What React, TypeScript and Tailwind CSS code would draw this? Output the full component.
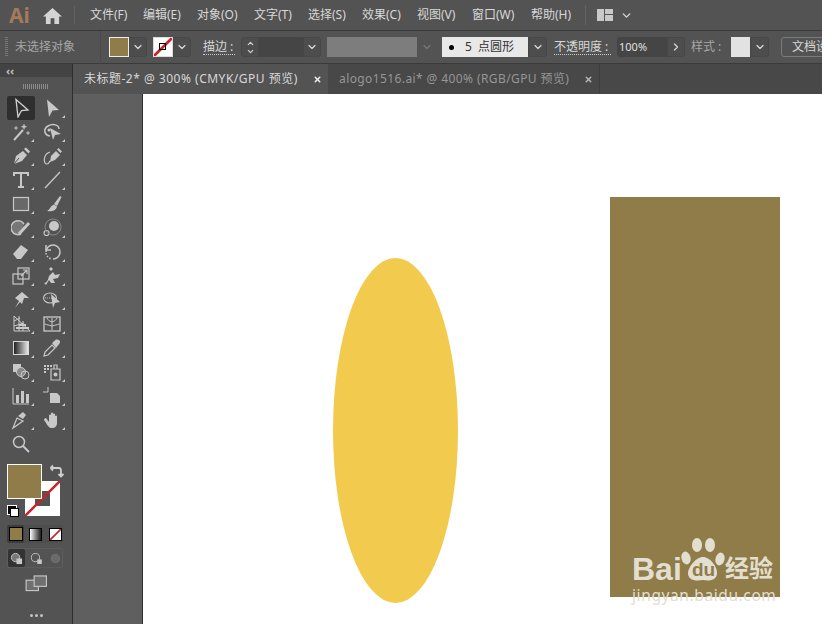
import React from "react";
import { ChevronDown, ChevronUp, ChevronRight, X } from "lucide-react";

const font = { fontFamily: '"Noto Sans", "Noto Sans CJK SC", sans-serif' };

const menus = [
  { label: "文件(F)", w: "w-[53px]" },
  { label: "编辑(E)", w: "w-[54px]" },
  { label: "对象(O)", w: "w-[57px]" },
  { label: "文字(T)", w: "w-[54px]" },
  { label: "选择(S)", w: "w-[54px]" },
  { label: "效果(C)", w: "w-[55px]" },
  { label: "视图(V)", w: "w-[55px]" },
  { label: "窗口(W)", w: "w-[59px]" },
  { label: "帮助(H)", w: "w-[53px]" },
];

const Drop: React.FC<{ w?: string }> = ({ w = "w-[18px]" }) => (
  <div className={`flex h-[20px] shrink-0 items-center justify-center rounded-r-[3px] border border-[#474747] bg-[#4d4d4d] ${w}`}>
    <ChevronDown size={12} strokeWidth={2.5} className="text-[#d6d6d6]" />
  </div>
);

const s = "none";
const c = "#c8c8c8";

// tool glyphs, 20x20 box, in the order of the panel (left, right per row)
const tools: React.ReactNode[] = [
  <path d="M5 1.500 L17 12 L10.500 12.500 L7 19 Z" fill={s} stroke="#d0d0d0" strokeWidth="1.300" />,
  <path d="M5 1.500 L17 12 L10.500 12.500 L7 19 Z" fill={c} />,
  <g stroke={c} fill={c}><path d="M3 18 L12 8" strokeWidth="2" /><path d="M13 2 l.8 2 2 .8 -2 .8 -.8 2 -.8 -2 -2 -.8 2 -.8z M5 4 l.5 1.500 1.500 .5 -1.500 .5 -.5 1.500 -.5 -1.500 -1.500 -.5 1.500 -.5z M17 9 l.5 1.500 1.500 .5 -1.500 .5 -.5 1.500 -.5 -1.500 -1.500 -.5 1.500 -.5z" strokeWidth=".3" /></g>,
  <g><path d="M8 14 C2 13 1 7 6 4 C11 1 17 3 17 7" fill={s} stroke={c} strokeWidth="1.500" /><path d="M8 6 L19 12 L13 13 L11 18 Z" fill={c} /><circle cx="7" cy="8" r="1.500" fill={c} /></g>,
  <g><path d="M3 18 L5 10 L12 5 L16 9 L11 15 Z" fill={c} /><path d="M13 3 L15 1.500 L19 5.500 L17.500 7.500 Z" fill={c} /><path d="M3 18 L8 12" stroke="#535353" strokeWidth="1" /></g>,
  <g><path d="M8 16 L9 10 L14 5 L18 9 L13 14 Z" fill={c} /><path d="M15 3.500 L16.500 2 L20 5.500 L18.500 7 Z" fill={c} /><path d="M8 6 C1 8 1 18 5 18 C7 18 7 16 8 15" fill={s} stroke={c} strokeWidth="1.200" /></g>,
  <path d="M3 6 V3 H17 V6 M10 3 V17 M7 17 H13" fill={s} stroke={c} strokeWidth="2" />,
  <path d="M3 18 L18 2" stroke={c} strokeWidth="1.300" />,
  <rect x="2.500" y="3.500" width="15" height="13" fill="#686868" stroke={c} strokeWidth="1.200" />,
  <g><path d="M12 10 L18 2 L19.500 3 L15 12 Z" fill={c} /><path d="M12 10.500 L15 12.500 C14 17 9 18 5 17 C8 16 8 12 12 10.500Z" fill={c} /></g>,
  <g><path d="M13 6 A7 7 0 1 0 10 16" fill="#777" stroke={c} strokeWidth="1.500" /><path d="M8 16 L18 5" stroke={c} strokeWidth="3" /></g>,
  <g><circle cx="12" cy="8" r="5" fill={c} /><circle cx="4.500" cy="15" r="2.500" fill={s} stroke={c} strokeWidth="1.200" /><circle cx="11" cy="9" r="8" fill={s} stroke="#888" strokeWidth="1" /></g>,
  <path d="M2 12 L10 3 L17 8 L10 17 H6 Z" fill={c} />,
  <g fill={s} stroke={c} strokeWidth="1.500"><path d="M4 10 A7 7 0 1 1 11 17" /><path d="M4 11 A7 7 0 0 0 10 17" strokeDasharray="1.500 1.500" /><path d="M4 3 V8 H9" /></g>,
  <g fill={s} stroke={c} strokeWidth="1.200"><rect x="2" y="8" width="10" height="10" /><rect x="7" y="2" width="11" height="11" /><path d="M10 10 L16 4 M12 4 H16 V8" /></g>,
  <g fill={c}><path d="M2 17 C5 17 6 14 7 10 L11 6 L13 9 L18 8 L16 12 L11 13 L13 17 H9 L7 14 L4 19 Z" /><path d="M7 3 L9 1 L11 3 L9 5Z" /></g>,
  <path d="M4 18 L8 11 L4 8 L11 2 L18 8 L13 8 L11 14 L9 12 Z" fill={c} />,
  <g><ellipse cx="8" cy="8" rx="6.500" ry="5" fill={s} stroke={c} strokeWidth="1.100" /><path d="M3 8 H11" stroke={c} strokeDasharray="1 1" /><path d="M9 4 L18 12 L13 13 L11 18 Z" fill={c} /></g>,
  <g fill={s} stroke={c} strokeWidth="1"><path d="M3 2 V17 H19 L3 2Z" /><path d="M3 7 L9 4 M3 12 L13 9 M8 2 V17 M12 7 V17" /><path d="M5 14 H18 M8 11 H15" strokeWidth="2" /></g>,
  <g fill={s} stroke={c} strokeWidth="1"><rect x="2" y="3" width="16" height="14" strokeWidth="1.300" /><path d="M10 4 V16 M10 8 C7 7 6 6 5 4 M10 8 C13 7 14 6 15 4 M10 12 C7 11 5 11 3 10 M10 12 C13 11 15 11 17 10" /></g>,
  <g><defs><linearGradient id="grad" x1="0" x2="1" y1="0" y2="0"><stop offset="0" stopColor="#1a1a1a" /><stop offset="1" stopColor="#eeeeee" /></linearGradient></defs><rect x="2.500" y="3.500" width="15" height="13" fill="url(#grad)" stroke="#d8d8d8" /></g>,
  <g><path d="M2 18 L3 14 L10 7 L13 10 L6 17 Z" fill={s} stroke={c} strokeWidth="1.200" /><path d="M10 5 L14 1.500 Q17 1 18 3 Q18.500 5 15.500 8 L14 10 Z" fill={c} /></g>,
  <g><rect x="2" y="2" width="8" height="8" fill={c} /><circle cx="10" cy="10" r="4.500" fill="#888" stroke={c} /><circle cx="14" cy="13" r="4" fill={s} stroke={c} /></g>,
  <g fill={c}><path d="M9 7 H18 V18 H9 Z M12 3 H15 V7 H12Z" fill={s} stroke={c} strokeWidth="1.200" /><circle cx="13.500" cy="12.500" r="2" /><path d="M2 3 h2 v2 h-2z M5 3 h2 v2 h-2z M8 3 h2 v2 h-2z M2 6 h2 v2 h-2z M5 6 h2 v2 h-2z M2 9 h2 v2 h-2z" /></g>,
  <g fill={c}><path d="M2 2 V18 H18" fill={s} stroke={c} strokeWidth="1" /><rect x="5" y="9" width="3" height="8" /><rect x="10" y="5" width="3" height="12" /><rect x="15" y="8" width="3" height="9" /></g>,
  <g><path d="M8 7 H15 L18 10 V17 H8 Z" fill={c} /><path d="M1 6 H6 M6 1 V6" stroke={c} strokeWidth="1" /></g>,
  <g><path d="M2 18 L6 8 L12 11 Z" fill={s} stroke={c} strokeWidth="1.200" /><path d="M7 6 L12 2 L15 5 L12 9 Z" fill={c} /></g>,
  <path d="M4 8 L7 12 V5 Q8 4 9 5 V10 V3 Q10 2 11 3 V10 V4 Q12 3 13 4 V10 V6 Q14 5 15 6 V13 C15 17 12 18.500 9 18 C6 17.500 5 14 2 10 Q2 8 4 8Z" fill={c} />,
  <g fill={s} stroke={c} strokeWidth="1.500"><circle cx="8" cy="8" r="5.500" /><path d="M12 12 L18 18" strokeWidth="2" /></g>,
  null,
];

const noMore = new Set([0, 28, 29]);

const ToolCell: React.FC<{ i: number }> = ({ i }) => {
  const glyph = tools[i];
  return (
    <div
      className={`relative flex h-[24px] w-[28px] items-center justify-center rounded-[2px] ${
        i === 0 ? "bg-[#2f2f2f]" : ""
      }`}
    >
      {glyph && (
        <svg viewBox="0 0 20 20" className="h-[20px] w-[20px]">
          {glyph}
        </svg>
      )}
      {!noMore.has(i) && (
        <span className="absolute bottom-[2px] right-[1px] h-0 w-0 border-b-[3px] border-l-[3px] border-b-[#c8c8c8] border-l-transparent" />
      )}
    </div>
  );
};

const NoneSwatch: React.FC<{ className: string }> = ({ className }) => (
  <svg viewBox="0 0 20 20" className={className}>
    <rect width="20" height="20" fill="#ffffff" />
    <path d="M0 20 L20 0" stroke="#c8232c" strokeWidth="3" />
  </svg>
);

const ToolPanel: React.FC = () => (
  <aside className="flex w-[73px] shrink-0 flex-col border-r border-[#2e2e2e] bg-[#535353]">
    <div className="flex h-[13px] items-center bg-[#434343] pl-[6px]">
      <span className="text-[11px] font-bold leading-none text-[#c4c4c4]">‹‹</span>
    </div>
    <div className="flex h-[19px] items-center justify-center">
      <div className="h-[5px] w-[26px] bg-[repeating-linear-gradient(90deg,#8a8a8a_0,#8a8a8a_1px,transparent_1px,transparent_2px)]" />
    </div>
    <div className="grid grid-cols-[28px_28px] gap-x-[3px] pl-[7px]">
      {tools.map((_, i) => (
        <ToolCell key={i} i={i} />
      ))}
    </div>
    {/* fill + stroke */}
    <div className="relative ml-[7px] mt-[8px] h-[54px] w-[56px]">
      <div className="absolute left-[18px] top-[17px] flex h-[35px] w-[35px] items-center justify-center bg-white">
        <div className="h-[15px] w-[15px] bg-[#535353]" />
        <svg viewBox="0 0 35 35" className="absolute inset-0">
          <path d="M0 35 L35 0" stroke="#c8232c" strokeWidth="2.500" />
        </svg>
      </div>
      <div className="absolute left-0 top-0 h-[35px] w-[35px] border border-white bg-[#8f7c48]" />
      <svg viewBox="0 0 14 14" className="absolute left-[43px] top-0 h-[14px] w-[14px]" fill="none" stroke="#cfcfcf" strokeWidth="1.800">
        <path d="M2 4 H9 Q11 4 11 7 V12 M0.500 4 L3 1.500 M0.500 4 L3 6.500 M8.500 10 L11 12.500 L13.500 10" />
      </svg>
      <div className="absolute left-0 top-[41px] h-[10px] w-[10px] border border-white bg-black" />
      <div className="absolute left-[3px] top-[44px] h-[9px] w-[9px] border border-black bg-white" />
    </div>
    <div className="ml-[7px] mt-[7px] flex h-[18px] w-[56px] items-center rounded-[2px] bg-[#4e4e4e]">
      <div className="flex h-[18px] w-[17px] items-center justify-center rounded-[2px] bg-[#3c3c3c]">
        <div className="h-[14px] w-[14px] border border-black bg-[#8f7c48]" />
      </div>
      <div className="ml-[5px] h-[13px] w-[13px] border border-black bg-gradient-to-r from-white to-[#222222]" />
      <div className="ml-[7px] flex border border-black">
        <NoneSwatch className="h-[11px] w-[11px]" />
      </div>
    </div>
    <div className="ml-[7px] mt-[5px] flex h-[20px] w-[56px] items-center rounded-[2px] border border-[#5c5c5c]">
      <div className="flex h-[18px] w-[17px] items-center justify-center rounded-[2px] bg-[#333333]">
        <svg viewBox="0 0 14 14" className="h-[13px] w-[13px]">
          <circle cx="6" cy="6" r="4.500" fill="#777" stroke="#c8c8c8" />
          <rect x="7" y="7" width="6" height="6" fill="#c8c8c8" />
        </svg>
      </div>
      <svg viewBox="0 0 14 14" className="ml-[5px] h-[13px] w-[13px]">
        <circle cx="6" cy="6" r="4.500" fill="#535353" stroke="#c8c8c8" />
        <rect x="8" y="8" width="5" height="5" fill="#c8c8c8" />
      </svg>
      <svg viewBox="0 0 14 14" className="ml-[7px] h-[13px] w-[13px]">
        <circle cx="7" cy="7" r="4.500" fill="#6a6a6a" stroke="#747474" />
      </svg>
    </div>
    <div className="mt-[7px] flex justify-center">
      <svg viewBox="0 0 24 18" className="h-[17px] w-[23px]" stroke="#c8c8c8" strokeWidth="1.200">
        <rect x="1" y="5.500" width="13" height="11" fill="#6f6f6f" />
        <rect x="9.500" y="1" width="13" height="11" fill="#6f6f6f" />
      </svg>
    </div>
    <div className="mt-[22px] flex justify-center gap-[2px]">
      <span className="h-[3px] w-[3px] rounded-full bg-[#c4c4c4]" />
      <span className="h-[3px] w-[3px] rounded-full bg-[#c4c4c4]" />
      <span className="h-[3px] w-[3px] rounded-full bg-[#c4c4c4]" />
    </div>
  </aside>
);

const Watermark: React.FC = () => (
  <div className="absolute left-[489px] top-[441px] h-[72px] w-[150px] text-[#e2ded0]">
    <div className="absolute left-0 top-[22px] text-[32px] font-bold leading-[24px]" style={{ fontFamily: '"Liberation Sans", sans-serif' }}>
      Bai
    </div>
    <svg viewBox="0 0 46 46" className="absolute left-[48px] top-[2px] h-[46px] w-[46px]" fill="#e2ded0">
      <ellipse cx="6" cy="21" rx="4.500" ry="6.500" transform="rotate(-15 6 21)" />
      <ellipse cx="17" cy="8" rx="5" ry="7" />
      <ellipse cx="30" cy="8" rx="5" ry="7" />
      <ellipse cx="40" cy="22" rx="4.500" ry="6.500" transform="rotate(15 40 22)" />
      <path d="M23 20 C30 20 38 30 37 37 C36 44 28 44 23 43 C17 44 9 44 8 37 C8 30 16 20 23 20Z" />
    </svg>
    <div className="absolute left-[60px] top-[26px] text-[19px] font-bold leading-[18px] text-[#8f7c48]" style={{ fontFamily: '"Liberation Sans", sans-serif' }}>
      du
    </div>
    <div className="absolute left-[93px] top-[18px] text-[24px] font-semibold leading-[28px]" style={{ fontFamily: '"Noto Sans CJK SC", sans-serif' }}>
      经验
    </div>
    <div className="absolute left-0 top-[50px] whitespace-nowrap text-[15.500px] leading-[20px] tracking-[0.6px] text-[#e2ded0]" style={font}>
      jingyan.baidu.com
    </div>
  </div>
);

export default function App() {
  return (
    <div className="flex h-[624px] w-[822px] flex-col overflow-hidden bg-[#535353] text-[12px] text-[#d8d8d8]" style={font}>
      {/* menu bar */}
      <header className="flex h-[31px] shrink-0 items-center border-b border-[#3a3a3a] bg-[#535353]">
        <span className="ml-[9px] w-[33px] text-[21px] font-bold leading-none text-[#a47a5c]">Ai</span>
        <svg viewBox="0 0 20 18" className="ml-[1px] h-[17px] w-[19px]" fill="#d4d4d4">
          <path d="M10 1 L20 10 H17 V18 H12 V12 H8 V18 H3 V10 H0 Z" />
        </svg>
        <div className="ml-[12px] mr-[15px] h-[18px] w-px bg-[#626262]" />
        {menus.map((m) => (
          <span key={m.label} className={`shrink-0 whitespace-nowrap text-[#d8d8d8] ${m.w}`}>
            {m.label}
          </span>
        ))}
        <div className="mx-[10px] ml-[1px] h-[20px] w-px bg-[#626262]" />
        <div className="flex items-center gap-[1px] pl-[1px]">
          <div className="h-[12px] w-[7px] bg-[#c8c8c8]" />
          <div className="flex flex-col gap-[1px]">
            <div className="h-[5px] w-[8px] bg-[#c8c8c8]" />
            <div className="h-[6px] w-[8px] bg-[#c8c8c8]" />
          </div>
        </div>
        <ChevronDown size={13} strokeWidth={2.5} className="ml-[7px] text-[#d6d6d6]" />
      </header>

      {/* control bar */}
      <div className="flex h-[33px] shrink-0 items-center whitespace-nowrap border-b border-[#3a3a3a] bg-[#535353]">
        <div className="ml-[5px] h-[20px] w-[3px] shrink-0 bg-[repeating-linear-gradient(180deg,#777777_0,#777777_1px,transparent_1px,transparent_2px)]" />
        <span className="ml-[7px] w-[60px] shrink-0 text-[#a6a6a6]">未选择对象</span>
        <div className="ml-[25px] mr-[8px] h-[33px] w-px shrink-0 bg-[#4a4a4a]" />
        <div className="h-[20px] w-[20px] shrink-0 border border-[#eeeeee] bg-[#8f7c48]" />
        <Drop />
        <div className="relative ml-[6px] h-[20px] w-[20px] shrink-0 border border-[#dddddd]">
          <NoneSwatch className="h-full w-full" />
          <div className="absolute left-[5px] top-[5px] h-[7px] w-[7px] border border-black" />
        </div>
        <Drop />
        <span className="ml-[12px] w-[32px] shrink-0 border-b border-dotted border-[#cfcfcf] leading-[15px] text-[#d8d8d8]">描边 :</span>
        <div className="ml-[6px] flex h-[20px] w-[18px] shrink-0 flex-col items-center justify-center rounded-l-[3px] border border-[#474747] bg-[#4d4d4d]">
          <ChevronUp size={9} strokeWidth={3} className="-mb-[1px] text-[#d6d6d6]" />
          <ChevronDown size={9} strokeWidth={3} className="text-[#d6d6d6]" />
        </div>
        <div className="h-[20px] w-[44px] shrink-0 bg-[#454545]" />
        <Drop />
        <div className="ml-[6px] h-[20px] w-[90px] shrink-0 bg-[#7d7d7d]" />
        <div className="flex h-[20px] w-[19px] shrink-0 items-center justify-center">
          <ChevronDown size={12} strokeWidth={2.5} className="text-[#757575]" />
        </div>
        <div className="ml-[6px] flex h-[20px] w-[86px] shrink-0 items-center bg-[#e8e8e8] pl-[7px] text-[#333333]">
          <span className="h-[5px] w-[5px] rounded-full bg-black" />
          <span className="ml-[11px]">5&nbsp; 点圆形</span>
        </div>
        <Drop w="w-[19px]" />
        <span className="ml-[7px] w-[57px] shrink-0 border-b border-dotted border-[#cfcfcf] leading-[15px] text-[#d8d8d8]">不透明度 :</span>
        <div className="ml-[6px] flex h-[20px] w-[50px] shrink-0 items-center rounded-l-[3px] bg-[#454545] pl-[2px] text-[11px] text-[#e0e0e0]">100%</div>
        <div className="flex h-[20px] w-[18px] shrink-0 items-center justify-center rounded-r-[3px] border border-[#474747] bg-[#4d4d4d]">
          <ChevronRight size={12} strokeWidth={2.5} className="text-[#d6d6d6]" />
        </div>
        <span className="ml-[6px] w-[34px] shrink-0 text-[#a6a6a6]">样式 :</span>
        <div className="ml-[6px] h-[20px] w-[19px] shrink-0 bg-[#e2e2e2]" />
        <Drop w="w-[19px]" />
        <div className="ml-[12px] flex h-[20px] w-[60px] shrink-0 items-center rounded-[3px] border border-[#7a7a7a] pl-[10px] text-[#d8d8d8]">文档设置</div>
      </div>

      <div className="flex min-h-0 flex-1">
        <ToolPanel />
        <div className="flex min-w-0 flex-1 flex-col">
          {/* tabs */}
          <div className="flex h-[30px] shrink-0 items-center whitespace-nowrap bg-[#484848]">
            <div className="flex h-full w-[255px] shrink-0 items-center justify-between bg-[#535353] pl-[11px] pr-[6px] tracking-[0.5px] text-[#d8d8d8]">
              <span>未标题-2* @ 300% (CMYK/GPU 预览)</span>
              <X size={9} strokeWidth={4} className="text-[#eeeeee]" />
            </div>
            <div className="flex h-full w-[272px] shrink-0 items-center justify-between border-r border-[#3e3e3e] pl-[11px] pr-[6px] tracking-[0.4px] text-[#969696]">
              <span>alogo1516.ai* @ 400% (RGB/GPU 预览)</span>
              <X size={9} strokeWidth={4} className="text-[#b4b4b4]" />
            </div>
          </div>
          {/* canvas */}
          <div className="flex min-h-0 flex-1 bg-[#5f5f5f]">
            <div className="w-[70px] shrink-0 border-r border-[#2e2e2e]" />
            <div className="relative min-w-0 flex-1 bg-white">
              <div className="absolute left-[190px] top-[164px] h-[345px] w-[125px] rounded-[50%] bg-[#f2cb4e]" />
              <div className="absolute left-[467px] top-[103px] h-[400px] w-[170px] bg-[#8f7c48]" />
              <Watermark />
            </div>
          </div>
        </div>
      </div>
    </div>
  );
}
